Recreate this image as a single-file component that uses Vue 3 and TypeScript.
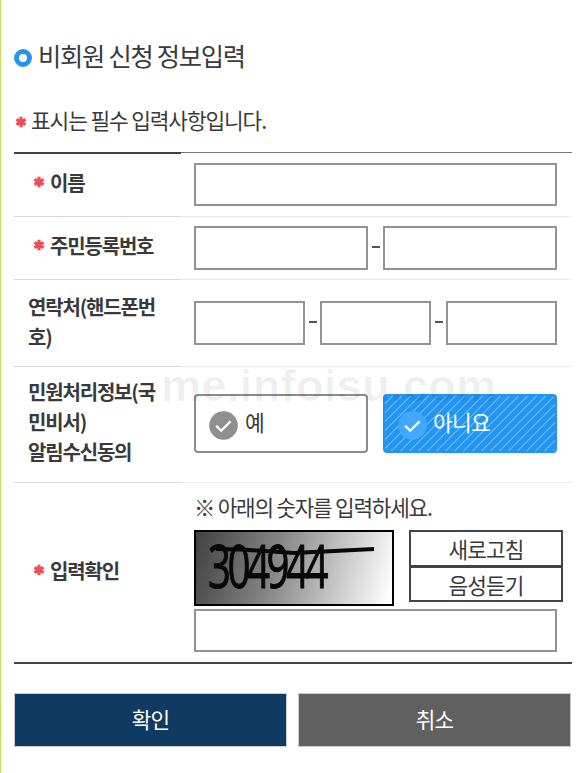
<script setup lang="ts">
import { ref } from 'vue'

const name = ref('')
const residentId = ref<string[]>(['', ''])
const phone = ref<string[]>(['', '', ''])
const agree = ref<'yes' | 'no'>('no')
const captcha = ref('')
const options: { value: 'yes' | 'no'; label: string }[] = [
  { value: 'yes', label: '예' },
  { value: 'no', label: '아니요' },
]
</script>

<template>
  <main class="page">
    <h1 class="title"><i class="ring"></i><span>비회원 신청 정보입력</span></h1>
    <p class="notice">
      <svg class="star" viewBox="0 0 12 12"><path d="M6 .8v10.4M1.4 3.3l9.2 5.4M10.6 3.3L1.4 8.7" /></svg>
      <span>표시는 필수 입력사항입니다.</span>
    </p>

    <form class="form" @submit.prevent>
      <div class="row r-name">
        <div class="label req">
          <svg class="star" viewBox="0 0 12 12"><path d="M6 .8v10.4M1.4 3.3l9.2 5.4M10.6 3.3L1.4 8.7" /></svg>
          <span>이름</span>
        </div>
        <div class="cell"><input v-model="name" type="text" /></div>
      </div>
      <div class="row r-id">
        <div class="label req">
          <svg class="star" viewBox="0 0 12 12"><path d="M6 .8v10.4M1.4 3.3l9.2 5.4M10.6 3.3L1.4 8.7" /></svg>
          <span>주민등록번호</span>
        </div>
        <div class="cell">
          <template v-for="(_, i) in residentId" :key="i">
            <span v-if="i" class="dash"><i></i></span>
            <input v-model="residentId[i]" type="text" />
          </template>
        </div>
      </div>
      <div class="row r-phone">
        <div class="label"><span>연락처(핸드폰번<br />호)</span></div>
        <div class="cell">
          <template v-for="(_, i) in phone" :key="i">
            <span v-if="i" class="dash"><i></i></span>
            <input v-model="phone[i]" type="text" />
          </template>
        </div>
      </div>
      <div class="row r-agree">
        <div class="label"><span>민원처리정보(국<br />민비서)<br />알림수신동의</span></div>
        <div class="cell options">
          <button
            v-for="o in options"
            :key="o.value"
            type="button"
            class="option"
            :class="{ on: agree === o.value }"
            @click="agree = o.value"
          >
            <svg class="check" viewBox="0 0 29 29">
              <circle cx="14.5" cy="14.5" r="14.3" />
              <path d="M7.2 14.7l5 5L21.6 10.4" />
            </svg>
            <span>{{ o.label }}</span>
          </button>
        </div>
        <span class="watermark">me.infoisu.com</span>
      </div>
      <div class="row r-captcha">
        <div class="label req">
          <svg class="star" viewBox="0 0 12 12"><path d="M6 .8v10.4M1.4 3.3l9.2 5.4M10.6 3.3L1.4 8.7" /></svg>
          <span>입력확인</span>
        </div>
        <div class="cell stack">
          <p class="hint">※ 아래의 숫자를 입력하세요.</p>
          <div class="captcha">
            <svg class="picture" viewBox="0 0 196 72">
              <text transform="translate(12 56) scale(0.67 1)">304944</text>
              <path d="M20 17L45 17.5L98 21L178 17" />
            </svg>
            <div class="tools">
              <button type="button">새로고침</button>
              <button type="button">음성듣기</button>
            </div>
          </div>
          <input v-model="captcha" type="text" />
        </div>
      </div>
    </form>

    <div class="actions">
      <button type="button" class="confirm"><span>확인</span></button>
      <button type="button" class="cancel"><span>취소</span></button>
    </div>
  </main>
</template>

<style>
body {
  background: #fff;
}
</style>

<style scoped>
* {
  box-sizing: border-box;
}
.page {
  height: 773px;
  padding: 35px 10px 0 13px;
  border-left: 1px solid #b9e04f;
  font-family: 'Noto Sans CJK KR', sans-serif;
  letter-spacing: -0.05em;
  color: #3a3a3a;
  overflow: hidden;
}
h1,
p {
  margin: 0;
  font-weight: 400;
}
.title {
  display: flex;
  align-items: center;
  height: 40px;
  font-size: 25.3px;
  line-height: 40px;
  letter-spacing: -0.05em;
}
.ring {
  width: 18px;
  height: 18px;
  margin: 5px 6px 0 0;
  border: 5px solid #2795ee;
  border-radius: 50%;
}
.notice {
  display: flex;
  align-items: center;
  height: 34px;
  margin-top: 28px;
  font-size: 21.4px;
  line-height: 34px;
  letter-spacing: -0.052em;
}
.notice span {
  margin-top: -1px;
}
.star {
  flex: none;
  width: 12px;
  height: 12px;
}
.star path {
  fill: none;
  stroke: #eb5056;
  stroke-width: 3.2;
}
.notice .star {
  margin: 3px 4px 0 1px;
}
.form {
  margin-top: 15px;
  border-bottom: 2px solid #444;
}
.row {
  position: relative;
  display: grid;
  grid-template-columns: 167px 1fr;
}
.label {
  display: flex;
  align-items: center;
  padding: 0 0 4px 14px;
  border-top: 1px solid #d8d8d8;
  font-size: 20px;
  font-weight: 700;
  line-height: 30px;
  letter-spacing: -0.059em;
  white-space: nowrap;
}
.req {
  padding-left: 19px;
}
.req .star {
  margin: 0 5px 2px 0;
}
.cell {
  display: flex;
  align-items: center;
  padding: 0 15px 0 13px;
  border-top: 1px solid #ebebeb;
}
.r-name {
  height: 64px;
}
.r-name .label {
  border-top: 2px solid #3f4145;
}
.r-name .cell {
  border-top-color: #777;
}
.r-id {
  height: 63px;
}
.r-phone {
  height: 87px;
}
.r-phone .label {
  padding-bottom: 3px;
}
.r-agree {
  height: 116px;
}
.r-agree .label {
  padding-bottom: 5px;
}
.r-captcha {
  height: 180px;
}
input {
  flex: 1;
  min-width: 0;
  width: 100%;
  height: 44px;
  padding: 0 8px;
  border: 2px solid #939393;
  border-radius: 0;
  background: #fff;
  font: inherit;
  outline: none;
}
.r-name input {
  height: 43px;
}
.dash {
  display: flex;
  justify-content: center;
  width: 15px;
}
.dash i {
  width: 8px;
  height: 2px;
  margin-top: -2px;
  background: #555;
}
.options {
  gap: 15px;
  padding-bottom: 2px;
}
button {
  padding: 0;
  font: inherit;
  letter-spacing: inherit;
  color: inherit;
}
.option {
  display: flex;
  flex: 1;
  align-items: center;
  height: 59px;
  padding: 0 0 0 13px;
  border: 2px solid #8c8c8c;
  border-radius: 4px;
  background: #fff;
  font-size: 21.5px;
}
.option span {
  margin: -4px 0 0 7px;
}
.option.on span {
  margin-left: 6px;
}
.check {
  width: 29px;
  height: 29px;
  margin-top: 4px;
}
.check circle {
  fill: #8f8f8f;
}
.check path {
  fill: none;
  stroke: #fff;
  stroke-width: 2.3;
}
.option.on {
  border-color: #2294f2;
  color: #fff;
  background: repeating-linear-gradient(135deg, #2294f2 0 4.5px, #5db1f7 4.8px 6px, #2294f2 6.3px 6.36px);
}
.option.on circle {
  fill: #43a8ff;
}
.watermark {
  position: absolute;
  left: 147px;
  top: -6px;
  font: 700 45px/52px 'Liberation Sans', sans-serif;
  letter-spacing: 0.4px;
  color: rgba(0, 0, 0, 0.058);
  pointer-events: none;
}
.stack {
  flex-direction: column;
  align-items: stretch;
  padding-top: 7px;
}
.hint {
  height: 34px;
  margin-bottom: 6px;
  font-size: 21.3px;
  line-height: 34px;
  letter-spacing: -0.057em;
}
.captcha {
  display: flex;
  gap: 15px;
  margin: 0 -6px 3px 0;
}
.picture {
  width: 200px;
  height: 76px;
  border: 2px solid #000;
  background: linear-gradient(105deg, #414141 0%, #858585 40%, #c4c4c4 70%, #fff 98%);
  overflow: visible;
}
.picture text {
  font: 60px 'Open Sans', sans-serif;
  letter-spacing: -5.2px;
  fill: #080808;
  stroke: #080808;
  stroke-width: 1;
}
.picture path {
  fill: none;
  stroke: #080808;
  stroke-width: 4;
}
.tools {
  flex: 1;
}
.tools button {
  display: block;
  width: 100%;
  height: 37px;
  border: 2px solid #444;
  background: #fff;
  font-size: 21.3px;
  line-height: 31px;
}
.tools button + button {
  height: 36px;
  margin-top: -1px;
}
.tools span {
  display: block;
}
.stack input {
  flex: none;
  height: 43px;
}
.actions {
  display: grid;
  grid-template-columns: 1fr 1fr;
  gap: 11px;
  margin-top: 29px;
  padding-right: 1px;
}
.actions button {
  height: 54px;
  padding-bottom: 3px;
  border: 1px solid #c8ccd0;
  color: #fff;
  font-size: 21.3px;
}
.actions .confirm {
  background: #0f3a62;
}
.actions .cancel {
  background: #606060;
}
</style>
